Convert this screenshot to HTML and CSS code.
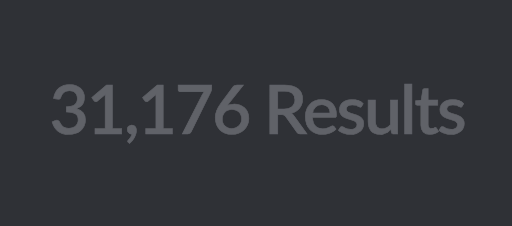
FILE: index.html
```html
<!DOCTYPE html>
<html lang="en">
<head>
    <meta charset="UTF-8">
    <title>Search results</title>
    <link rel="stylesheet" href="styles.css">
</head>
<body>
    <div class="results">
        <span class="results-count">31,176 Results</span>
    </div>
</body>
</html>
```

FILE: styles.css
```css
html, body {
    margin: 0;
    padding: 0;
    height: 100%;
    background-color: #2f3136;
}
.results {
    height: 226px;
    display: flex;
    justify-content: center;
    align-items: center;
}
.results-count {
    font-family: Lato, "Open Sans", sans-serif;
    font-weight: 600;
    font-size: 68px;
    letter-spacing: -2.2px;
    color: #606268;
    margin-top: -12px;
    margin-left: 2px;
    -webkit-text-stroke: 0.6px #606268;
}
```
